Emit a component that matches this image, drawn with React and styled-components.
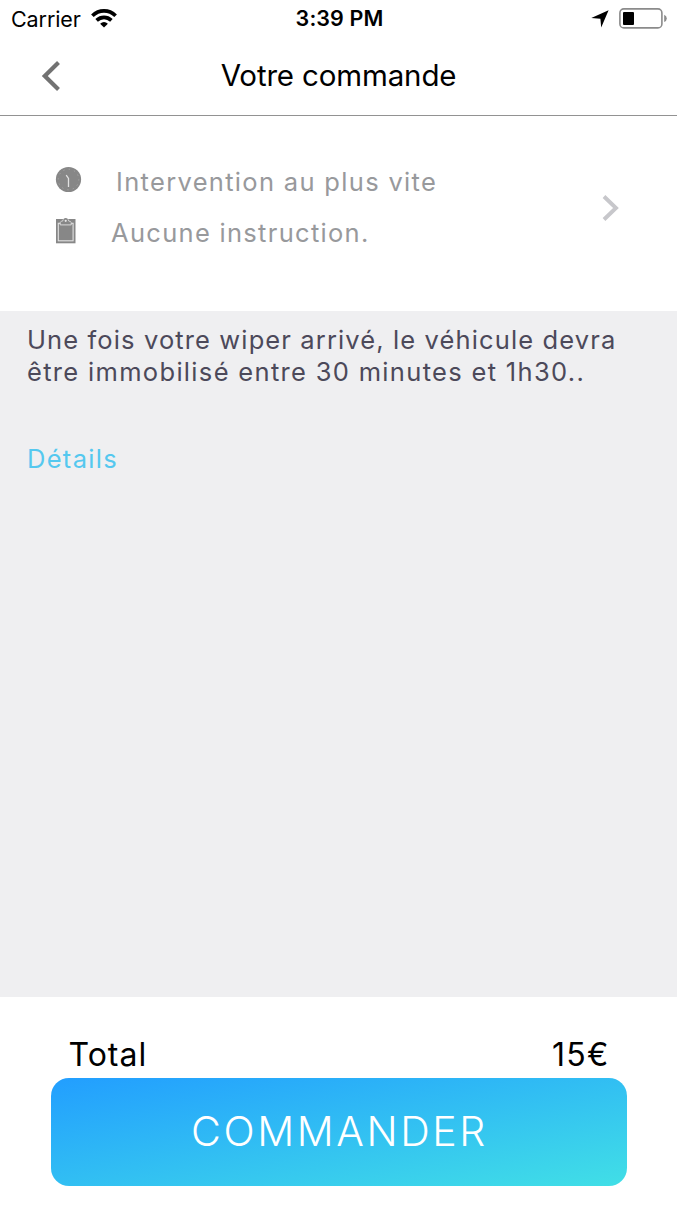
import React from 'react';
import styled, { createGlobalStyle } from 'styled-components';

const GlobalStyle = createGlobalStyle`
  * {
    box-sizing: border-box;
  }
  body {
    margin: 0;
    background: #fff;
    font-family: Inter, 'Liberation Sans', sans-serif;
  }
`;

const Screen = styled.div`
  display: flex;
  flex-direction: column;
  width: 677px;
  height: 1205px;
  overflow: hidden;
  background: #fff;
`;

const StatusBar = styled.div`
  display: grid;
  grid-template-columns: 1fr auto 1fr;
  align-items: center;
  height: 37px;
  padding: 0 10px 0 11px;
  font-size: 21.5px;
  color: #000;
`;

const StatusSide = styled.div`
  display: flex;
  align-items: center;
  justify-content: ${(props) => (props.$end ? 'flex-end' : 'flex-start')};
  gap: 10px;
`;

const Carrier = styled.span`
  letter-spacing: -0.1px;
`;

const Clock = styled.span`
  padding: 0 0 1px 1px;
  font-weight: 600;
  letter-spacing: 0.1px;
`;

const Header = styled.header`
  display: grid;
  grid-template-columns: 80px 1fr 80px;
  align-items: center;
  height: 79px;
  padding-bottom: 1px;
  border-bottom: 1px solid #929292;
`;

const BackButton = styled.button`
  display: flex;
  padding: 0 0 0 41px;
  border: none;
  background: none;
`;

const Title = styled.h1`
  margin: 0;
  padding-bottom: 2px;
  font-size: 29.5px;
  font-weight: 400;
  letter-spacing: -0.15px;
  text-align: center;
  color: #000;
`;

const Options = styled.section`
  display: flex;
  align-items: center;
  justify-content: space-between;
  height: 195px;
  padding: 0 57px 11px 55px;
`;

const OptionList = styled.div`
  display: flex;
  flex-direction: column;
  padding-bottom: 2px;
`;

const OptionRow = styled.div`
  display: flex;
  align-items: center;
  height: 50.5px;
  gap: ${(props) => props.$gap};
  svg {
    margin-bottom: 4px;
  }
`;

const OptionText = styled.span`
  font-size: 25.5px;
  letter-spacing: ${(props) => props.$spacing};
  color: #98999c;
`;

const Content = styled.main`
  flex: 1;
  padding: 13px 27px;
  background: #efeff1;
`;

const Notice = styled.p`
  margin: 0 0 55px;
  font-size: 25.5px;
  line-height: 32px;
  color: #4c495a;
`;

const NoticeLine = styled.span`
  display: block;
  white-space: nowrap;
  letter-spacing: ${(props) => props.$spacing};
`;

const DetailsLink = styled.a`
  font-size: 25.5px;
  line-height: 32px;
  letter-spacing: 1.3px;
  color: #55c8ef;
`;

const Footer = styled.footer`
  height: 208px;
  padding: 33px 50.5px 0;
`;

const TotalRow = styled.div`
  display: flex;
  justify-content: space-between;
  height: 48px;
  padding: 0 18px;
  font-size: 32px;
  line-height: 49px;
  color: #000;
`;

const TotalLabel = styled.span`
  letter-spacing: 1px;
`;

const Price = styled.span`
  margin-right: -1px;
  letter-spacing: 1.2px;
`;

const OrderButton = styled.button`
  display: block;
  width: 576px;
  height: 108px;
  padding: 0 0 2px 2px;
  border: none;
  border-radius: 18px;
  background: linear-gradient(to bottom right, #229eff, #41dfe6);
  font-family: inherit;
  font-size: 41px;
  font-weight: 300;
  letter-spacing: 2.6px;
  color: #fff;
`;

const WifiIcon = () => (
  <svg width="26" height="19" viewBox="0 0 26 19">
    <g fill="none" stroke="#000" strokeWidth="3.7">
      <path d="M1.4 6.8 C8 0.3 18 0.3 24.6 6.8" />
      <path d="M5.6 11.3 C10 7.3 16 7.3 20.4 11.3" />
    </g>
    <path d="M9.1 14.8 Q13 11.4 16.9 14.8 L13 18.5 Z" />
  </svg>
);

const LocationIcon = () => (
  <svg width="18" height="18" viewBox="0 0 18 18">
    <path d="M17.6 0.3 L10.2 17.6 L9.4 8.8 L0.3 8.1 Z" />
  </svg>
);

const BatteryIcon = () => (
  <svg width="48" height="21" viewBox="0 0 48 21">
    <rect x="0.9" y="0.9" width="42" height="19" rx="4" fill="none" stroke="#8b8b8b" strokeWidth="1.6" />
    <rect x="4" y="4" width="11" height="13" rx="1" />
    <path d="M45.2 6.8 Q47.8 8 47.8 10.4 Q47.8 12.8 45.2 14 Z" fill="#8b8b8b" />
  </svg>
);

const BackIcon = () => (
  <svg width="20" height="30" viewBox="0 0 20 30">
    <path d="M17.5 1.6 L3.8 15 L17.5 28.4" fill="none" stroke="#727272" strokeWidth="4.2" />
  </svg>
);

const ForwardIcon = () => (
  <svg width="18" height="26" viewBox="0 0 18 26">
    <path d="M2 1.5 L14 13 L2 24.5" fill="none" stroke="#c7c7cb" strokeWidth="3.9" />
  </svg>
);

const ClockIcon = () => (
  <svg width="27" height="27" viewBox="0 0 27 27">
    <circle cx="13.5" cy="13.5" r="12.6" fill="#878787" />
    <circle cx="13.5" cy="13.5" r="10.3" fill="none" stroke="#b4b4b4" strokeWidth="0.9" strokeDasharray="0.9 4.493" />
    <path d="M11.2 9.2 L13.5 12.5 V21" fill="none" stroke="#e2e2e2" strokeWidth="1.3" />
  </svg>
);

const ClipboardIcon = () => (
  <svg width="22" height="27" viewBox="0 0 22 27">
    <rect x="1" y="2" width="19.5" height="24.3" fill="#878787" />
    <rect x="3.3" y="6.3" width="14.8" height="17.5" fill="none" stroke="#e2e2e2" strokeWidth="1.1" />
    <path
      d="M5.2 7.9 V5.8 Q5.4 4.3 7.6 4.1 Q8.4 0.9 10.7 0.9 Q13 0.9 13.8 4.1 Q16 4.3 16.2 5.8 V7.9 Z"
      fill="#878787"
    />
    <path d="M5.2 5.4 V7.9 H16.2 V5.4" fill="none" stroke="#e2e2e2" strokeWidth="0.9" />
    <path d="M5.4 5 Q5.9 4.2 7.6 4.1 L8.3 2.3 M16 5 Q15.5 4.2 13.8 4.1 L13.1 2.3" fill="none" stroke="#e2e2e2" strokeWidth="0.8" />
    <circle cx="10.7" cy="3.8" r="1.1" fill="#e8e8e8" />
  </svg>
);

export default function App() {
  return (
    <>
      <GlobalStyle />
      <Screen>
        <StatusBar>
          <StatusSide>
            <Carrier>Carrier</Carrier>
            <WifiIcon />
          </StatusSide>
          <Clock>3:39 PM</Clock>
          <StatusSide $end>
            <LocationIcon />
            <BatteryIcon />
          </StatusSide>
        </StatusBar>
        <Header>
          <BackButton aria-label="Retour">
            <BackIcon />
          </BackButton>
          <Title>Votre commande</Title>
        </Header>
        <Options>
          <OptionList>
            <OptionRow $gap="34px">
              <ClockIcon />
              <OptionText $spacing="1.32px">Intervention au plus vite</OptionText>
            </OptionRow>
            <OptionRow $gap="34px">
              <ClipboardIcon />
              <OptionText $spacing="1.3px">Aucune instruction.</OptionText>
            </OptionRow>
          </OptionList>
          <ForwardIcon />
        </Options>
        <Content>
          <Notice>
            <NoticeLine $spacing="1.12px">Une fois votre wiper arrivé, le véhicule devra</NoticeLine>
            <NoticeLine $spacing="1.32px">être immobilisé entre 30 minutes et 1h30..</NoticeLine>
          </Notice>
          <DetailsLink>Détails</DetailsLink>
        </Content>
        <Footer>
          <TotalRow>
            <TotalLabel>Total</TotalLabel>
            <Price>15€</Price>
          </TotalRow>
          <OrderButton>COMMANDER</OrderButton>
        </Footer>
      </Screen>
    </>
  );
}
